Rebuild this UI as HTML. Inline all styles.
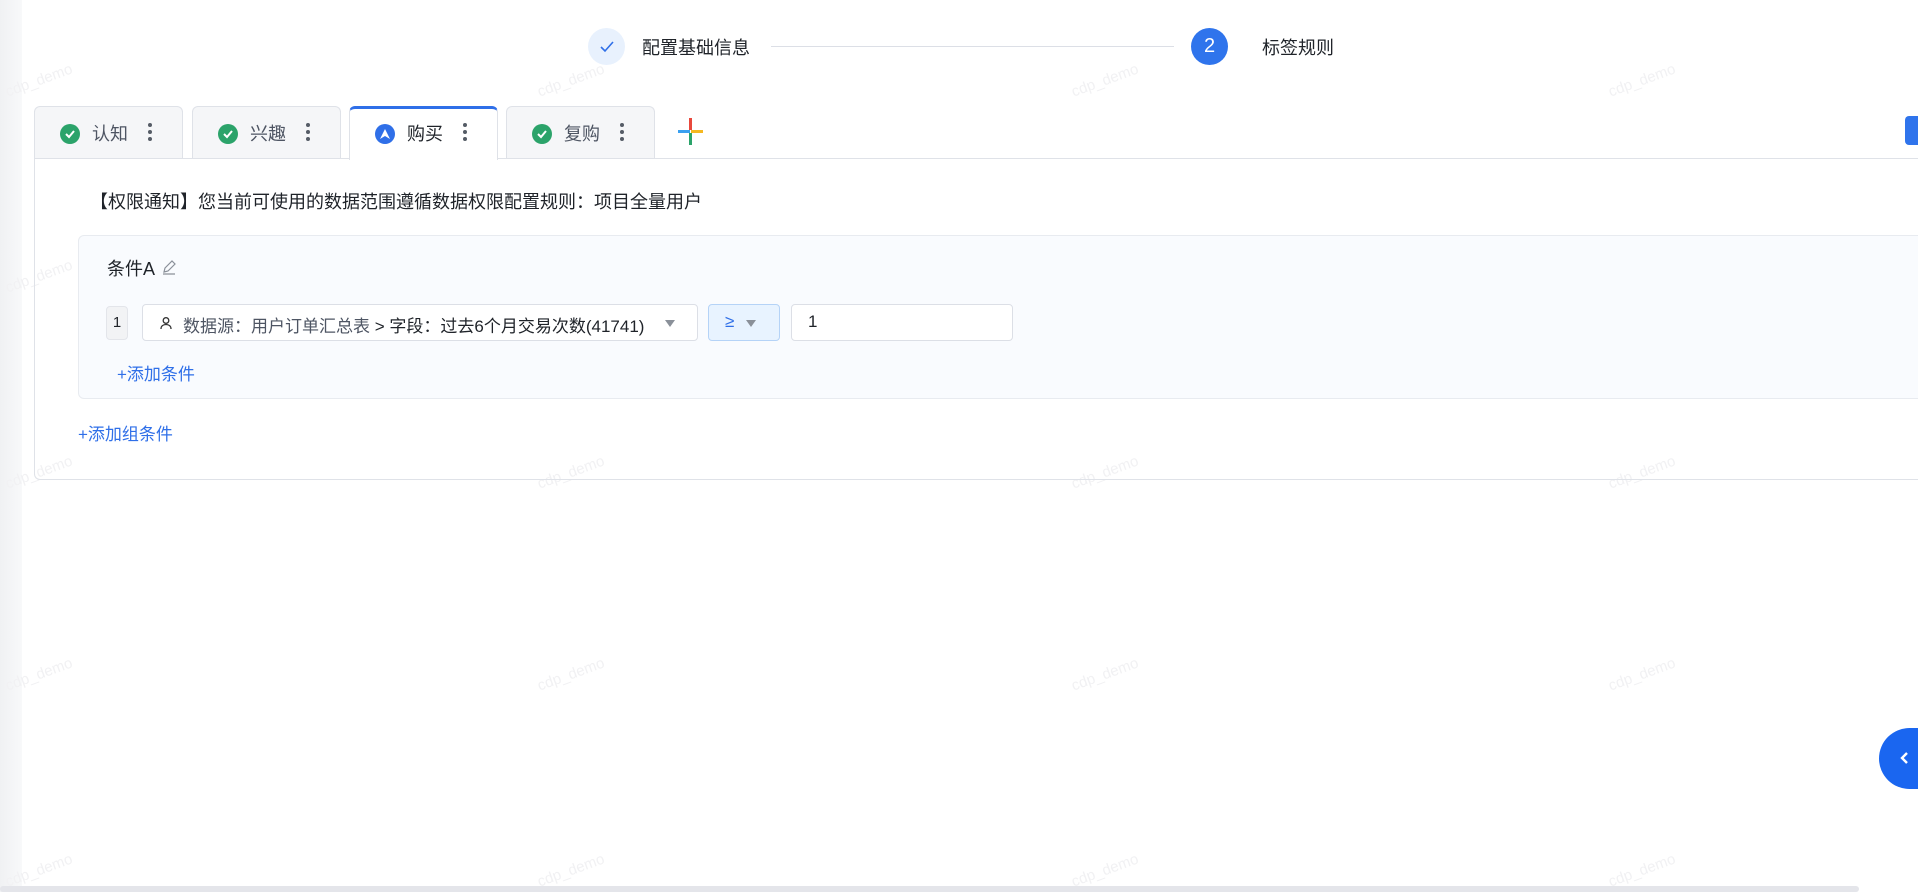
<!DOCTYPE html>
<html><head><meta charset="utf-8"><style>
*{box-sizing:border-box;margin:0;padding:0}
body{width:1918px;height:892px;overflow:hidden;background:#fff;font-family:"Liberation Sans","Noto Sans CJK SC",sans-serif;color:#1f2329;position:relative}
.abs{position:absolute}
.strip{left:0;top:0;width:22px;height:892px;background:linear-gradient(90deg,#f0f1f3,#f8f9fa)}
.wm{position:absolute;color:#f1f1f3;font-size:15px;transform:rotate(-20deg);white-space:nowrap}
.tab{position:absolute;top:106px;height:53px;width:149px;background:#f5f6f8;border:1px solid #dfe2e8;border-bottom:none;border-radius:6px 6px 0 0;display:flex;align-items:center;font-size:18px;color:#4e5563}
.tab .ic{position:absolute;left:25px;top:17px;width:20px;height:20px;border-radius:50%;background:#2ba36a}
.tab .tx{position:absolute;left:57px;top:13px}
.tab .dots{position:absolute;left:113px;top:16px;width:4px}
.dots i{display:block;width:4px;height:4px;border-radius:2px;background:#555c66;margin-bottom:3px}
.sel{position:absolute;border:1px solid #dcdfe6;border-radius:4px;background:#fff;font-size:17px;color:#4e5563}
.tri{display:inline-block;width:0;height:0;border-left:5px solid transparent;border-right:5px solid transparent;border-top:7px solid #8a9099}
</style></head><body>
<div class="abs strip"></div>
<div class="wm" style="left:4px;top:72px">cdp_demo</div><div class="wm" style="left:536px;top:72px">cdp_demo</div><div class="wm" style="left:1070px;top:72px">cdp_demo</div><div class="wm" style="left:1607px;top:72px">cdp_demo</div>
<div class="wm" style="left:4px;top:268px">cdp_demo</div><div class="wm" style="left:536px;top:268px">cdp_demo</div><div class="wm" style="left:1070px;top:268px">cdp_demo</div><div class="wm" style="left:1607px;top:268px">cdp_demo</div>
<div class="wm" style="left:4px;top:464px">cdp_demo</div><div class="wm" style="left:536px;top:464px">cdp_demo</div><div class="wm" style="left:1070px;top:464px">cdp_demo</div><div class="wm" style="left:1607px;top:464px">cdp_demo</div>
<div class="wm" style="left:4px;top:666px">cdp_demo</div><div class="wm" style="left:536px;top:666px">cdp_demo</div><div class="wm" style="left:1070px;top:666px">cdp_demo</div><div class="wm" style="left:1607px;top:666px">cdp_demo</div>
<div class="wm" style="left:4px;top:862px">cdp_demo</div><div class="wm" style="left:536px;top:862px">cdp_demo</div><div class="wm" style="left:1070px;top:862px">cdp_demo</div><div class="wm" style="left:1607px;top:862px">cdp_demo</div>

<div class="abs" style="left:588px;top:28px;width:37px;height:37px;border-radius:50%;background:#e8f1fd"></div>
<svg class="abs" style="left:597px;top:37px" width="19" height="19" viewBox="0 0 19 19"><path d="M4 10l4 4 8-9" fill="none" stroke="#2f6fe8" stroke-width="1.6"/></svg>
<div class="abs" style="left:642px;top:34px;font-size:18px;color:#1f2329">配置基础信息</div>
<div class="abs" style="left:771px;top:46px;width:403px;height:1px;background:#dcdfe6"></div>
<div class="abs" style="left:1191px;top:28px;width:37px;height:37px;border-radius:50%;background:#2f74ec;color:#fff;font-size:20px;text-align:center;line-height:37px">2</div>
<div class="abs" style="left:1262px;top:34px;font-size:18px;color:#1f2329">标签规则</div>

<div class="tab" style="left:34px"><div class="ic"></div><svg class="abs" style="left:29px;top:21px" width="12" height="12"><path d="M2 6l3 3 5-6" fill="none" stroke="#fff" stroke-width="2"/></svg><span class="tx">认知</span><div class="dots"><i></i><i></i><i></i></div></div>
<div class="tab" style="left:192px"><div class="ic"></div><svg class="abs" style="left:29px;top:21px" width="12" height="12"><path d="M2 6l3 3 5-6" fill="none" stroke="#fff" stroke-width="2"/></svg><span class="tx">兴趣</span><div class="dots"><i></i><i></i><i></i></div></div>
<div class="tab" style="left:349px;top:106px;height:54px;background:#fff;border-top:3px solid #2f6fe8;color:#1f2329;z-index:2"><div class="ic" style="background:#2f6fe8;top:15px"></div><svg class="abs" style="left:29px;top:19px" width="12" height="12"><path d="M6 1L11 11 6 8 1 11Z" fill="#fff"/></svg><span class="tx" style="top:11px">购买</span><div class="dots" style="top:14px"><i></i><i></i><i></i></div></div>
<div class="tab" style="left:506px"><div class="ic"></div><svg class="abs" style="left:29px;top:21px" width="12" height="12"><path d="M2 6l3 3 5-6" fill="none" stroke="#fff" stroke-width="2"/></svg><span class="tx">复购</span><div class="dots"><i></i><i></i><i></i></div></div>
<div class="abs" style="left:678px;top:130px;width:12px;height:3px;background:#3aa0f0"></div>
<div class="abs" style="left:691px;top:130px;width:12px;height:3px;background:#f5b820"></div>
<div class="abs" style="left:689px;top:118px;width:3px;height:12px;background:#e8483c"></div>
<div class="abs" style="left:689px;top:133px;width:3px;height:12px;background:#2ba36a"></div>
<div class="abs" style="left:1905px;top:116px;width:20px;height:29px;border-radius:4px;background:#2f74ec"></div>

<div class="abs" style="left:34px;top:158px;width:1900px;height:322px;border:1px solid #dfe2e8;border-right:none;border-radius:0 0 0 6px"></div>
<div class="abs" style="left:90px;top:188px;font-size:18px;color:#1f2329">【权限通知】您当前可使用的数据范围遵循数据权限配置规则：项目全量用户</div>
<div class="abs" style="left:78px;top:235px;width:1860px;height:164px;border:1px solid #e8ebf0;border-radius:6px;background:#f9fbfe"></div>
<div class="abs" style="left:107px;top:255px;font-size:18px;color:#1f2329">条件A</div>
<svg class="abs" style="left:161px;top:259px" width="16" height="16"><path d="M3 13l1-4 7-7 3 3-7 7z M2 15h12" fill="none" stroke="#8a9099" stroke-width="1.2"/></svg>
<div class="abs" style="left:106px;top:306px;width:22px;height:34px;border:1px solid #e3e5ea;border-radius:4px;background:#f2f3f5;font-size:15px;text-align:center;line-height:32px">1</div>
<div class="sel" style="left:142px;top:304px;width:556px;height:37px">
 <svg class="abs" style="left:16px;top:11px" width="14" height="14"><circle cx="7" cy="4.5" r="2.8" fill="none" stroke="#333" stroke-width="1.3"/><path d="M2 13c0-3 2.2-4.5 5-4.5s5 1.5 5 4.5" fill="none" stroke="#333" stroke-width="1.3"/></svg>
 <span class="abs" style="left:40px;top:7px;white-space:nowrap">数据源：用户订单汇总表 <span style="color:#1f2329">&gt; 字段：过去6个月交易次数(41741)</span></span>
 <span class="tri abs" style="left:522px;top:15px"></span>
</div>
<div class="sel" style="left:708px;top:304px;width:72px;height:37px;background:#e8f3ff;border-color:#b5d3f7;color:#2f6fe8"><span class="abs" style="left:16px;top:7px">≥</span><span class="tri abs" style="left:37px;top:15px"></span></div>
<div class="sel" style="left:791px;top:304px;width:222px;height:37px;color:#1f2329"><span class="abs" style="left:16px;top:7px">1</span></div>
<div class="abs" style="left:117px;top:360px;font-size:17px;color:#2f6fe8">+添加条件</div>
<div class="abs" style="left:78px;top:420px;font-size:17px;color:#2f6fe8">+添加组条件</div>

<div class="abs" style="left:1879px;top:728px;width:80px;height:61px;border-radius:31px;background:#1a66f0"></div>
<svg class="abs" style="left:1899px;top:751px" width="12" height="14"><path d="M8 2L3 7l5 5" fill="none" stroke="#fff" stroke-width="2.4"/></svg>
<div class="abs" style="left:0;top:886px;width:1859px;height:6px;background:#e4e5ea;border-radius:3px"></div>
</body></html>
